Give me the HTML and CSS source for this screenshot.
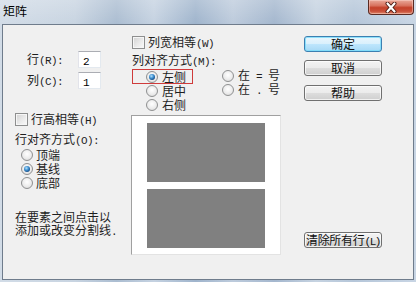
FILE: index.html
```html
<!DOCTYPE html>
<html>
<head>
<meta charset="utf-8">
<title>矩阵</title>
<link rel="stylesheet" href="styles.css">
</head>
<body>
<div class="window">
  <div class="titlebar">
    <span class="title">矩阵</span>
    <div class="close">
      <svg width="16" height="11" viewBox="0 0 16 11"><path d="M4.5 1.5 L11.5 9.5 M11.5 1.5 L4.5 9.5" stroke="#4a1a12" stroke-width="4" stroke-linecap="round"/><path d="M4.5 1.5 L11.5 9.5 M11.5 1.5 L4.5 9.5" stroke="#ffffff" stroke-width="2.2" stroke-linecap="round"/></svg>
    </div>
  </div>
  <div class="client">
    <div class="col col-left">
      <div class="field-row"><span class="field-label">行<span class="a">(R):</span></span><div class="field"><span class="a">2</span></div></div>
      <div class="field-row second"><span class="field-label">列<span class="a">(C):</span></span><div class="field"><span class="a">1</span></div></div>
      <div class="check row-check"><span class="box"></span><span>行高相等<span class="a">(H)</span></span></div>
      <div class="group-label">行对齐方式<span class="a">(O):</span></div>
      <div class="radios left-radios">
        <div class="radio"><span class="dot"></span><span>顶端</span></div>
        <div class="radio"><span class="dot on"></span><span>基线</span></div>
        <div class="radio"><span class="dot"></span><span>底部</span></div>
      </div>
      <p class="hint">在要素之间点击以<br>添加或改变分割线<span class="a">.</span></p>
    </div>
    <div class="col col-mid">
      <div class="check col-check"><span class="box"></span><span>列宽相等<span class="a">(W)</span></span></div>
      <div class="mid-label">列对齐方式<span class="a">(M):</span></div>
      <div class="align">
        <div class="align-left">
          <div class="focus"><div class="radio"><span class="dot on"></span><span>左侧</span></div></div>
          <div class="radio indent"><span class="dot"></span><span>居中</span></div>
          <div class="radio indent"><span class="dot"></span><span>右侧</span></div>
        </div>
        <div class="align-right">
          <div class="radio"><span class="dot"></span><span>在<span class="a"> = </span>号</span></div>
          <div class="radio"><span class="dot"></span><span>在<span class="a"> . </span>号</span></div>
        </div>
      </div>
      <div class="preview">
        <div class="cell"></div>
        <div class="cell"></div>
      </div>
    </div>
    <div class="col col-right">
      <div class="btn default">确定</div>
      <div class="btn">取消</div>
      <div class="btn help">帮助</div>
      <div class="btn clear">清除所有行<span class="a">(L)</span></div>
    </div>
  </div>
</div>
</body>
</html>
```
FILE: styles.css
```css
* { box-sizing: border-box; }
html, body { margin: 0; padding: 0; }
body {
  width: 416px;
  height: 282px;
  overflow: hidden;
  font-family: "Noto Sans CJK SC", sans-serif;
  font-size: 12px;
  color: #1e1e1e;
  background: #c3d5e9;
}
.a {
  font-family: "Liberation Mono", monospace;
  font-size: 11px;
  letter-spacing: -0.6px;
  white-space: pre;
}
.window {
  width: 416px;
  height: 282px;
  display: flex;
  flex-direction: column;
  padding: 0 2px 2px 2px;
  background:
    linear-gradient(180deg, rgba(255,255,255,0.22) 0, rgba(255,255,255,0) 24px),
    linear-gradient(90deg, #d2dce7 0%, #c8d4e1 18%, #abbdd1 28%, #c5d2e1 37%, #9fb4cc 47%, #bdcbdc 56%, #a4b7ce 66%, #c6d3e1 76%, #b5c6d9 85%, #c8d5e4 100%);
}
.titlebar {
  height: 24px;
  flex: none;
  display: flex;
  justify-content: space-between;
  align-items: flex-start;
  padding-left: 1px;
}
.title {
  margin-top: 4px;
  line-height: 14px;
  font-size: 12px;
  color: #000;
}
.close {
  width: 46px;
  height: 15px;
  border: 1px solid #5a2a22;
  border-top: none;
  border-radius: 0 0 4px 4px;
  background: linear-gradient(180deg, #e9a99a 0%, #d8735f 40%, #c4412a 55%, #c9503a 80%, #e08a6c 100%);
  box-shadow: inset 0 0 0 1px rgba(255,220,210,0.45);
  display: flex;
  justify-content: center;
  align-items: center;
}
.client {
  flex: 1;
  border: 1px solid #6f7c8c;
  background: #f0f0f0;
  display: grid;
  grid-template-columns: 128px 160px 122px;
}
.col { display: flex; flex-direction: column; }

/* left column */
.col-left { padding-top: 26px; }
.field-row {
  display: flex;
  align-items: center;
  height: 17px;
  padding-left: 24px;
}
.field-row.second { margin-top: 4px; }
.field-label { width: 51px; line-height: 14px; }
.field {
  width: 23px;
  height: 17px;
  background: #fff;
  border: 1px solid #e3e9ef;
  border-top-color: #abadb3;
  border-left-color: #e2e3ea;
  padding-left: 4px;
  line-height: 15px;
  color: #000;
}
.check {
  display: flex;
  align-items: center;
  gap: 3px;
  height: 13px;
  line-height: 13px;
}
.box {
  width: 13px;
  height: 13px;
  flex: none;
  border: 1px solid #8e8f8f;
  background: linear-gradient(135deg, #d2d2d2 0%, #ececec 60%, #fafafa 100%);
  box-shadow: inset 0 0 0 1px #f6f6f6;
}
.row-check { margin-top: 24px; padding-left: 12px; }
.group-label { margin-top: 6px; padding-left: 12px; line-height: 14px; }
.radios { display: flex; flex-direction: column; }
.left-radios { padding-left: 18px; }
.radio {
  display: flex;
  align-items: center;
  gap: 4px;
  height: 14px;
  line-height: 14px;
}
.left-radios .radio { gap: 3px; }
.dot {
  position: relative;
  width: 12px;
  height: 12px;
  flex: none;
  border-radius: 50%;
  border: 1px solid #8f9091;
  background: radial-gradient(circle at 50% 40%, #ffffff 0%, #ececec 55%, #d3d3d3 100%);
}
.dot.on::after {
  content: "";
  position: absolute;
  left: 2px;
  top: 2px;
  width: 6px;
  height: 6px;
  border-radius: 50%;
  background: radial-gradient(circle at 40% 35%, #b6e2fb 0%, #3f90d0 40%, #134a85 75%, #0a2f5a 100%);
}
.hint { margin: 20px 0 0 0; padding-left: 12px; line-height: 13px; }

/* middle column */
.col-mid { padding-top: 11px; }
.col-check { padding-left: 1px; }
.mid-label { margin-top: 4px; padding-left: 1px; line-height: 13px; }
.align { display: flex; }
.align-left { width: 91px; display: flex; flex-direction: column; }
.focus {
  margin-left: 1px;
  width: 61px;
  height: 15px;
  border: 1px solid #cf3b3b;
  padding-left: 13px;
}
.focus .radio { height: 13px; line-height: 13px; }
.radio.indent { padding-left: 15px; }
.align-right { display: flex; flex-direction: column; }
.preview {
  margin-top: 3px;
  width: 150px;
  height: 140px;
  background: #fff;
  border: 1px solid #a0a0a0;
  border-right-color: #e3e3e3;
  border-bottom-color: #e3e3e3;
  padding: 7px 15px 6px 15px;
  display: flex;
  flex-direction: column;
  gap: 7px;
}
.cell { height: 59px; background: #808080; }

/* right column */
.col-right { padding: 11px 0 31px 13px; gap: 8px; }
.btn {
  width: 78px;
  height: 16px;
  border: 1px solid #707070;
  border-radius: 3px;
  background: linear-gradient(180deg, #f3f3f3 0%, #ebebeb 50%, #dddddd 51%, #cfcfcf 100%);
  box-shadow: inset 0 0 0 1px rgba(255,255,255,0.7);
  text-align: center;
  line-height: 14px;
  color: #111;
  white-space: nowrap;
  overflow: hidden;
}
.btn.default {
  border-color: #3c7fb1;
  background: linear-gradient(180deg, #eaf6fd 0%, #d9f0fc 50%, #bee6fd 51%, #a7d9f5 100%);
  box-shadow: inset 0 0 0 1px rgba(120,220,250,0.8);
}
.btn.help { margin-top: 1px; }
.btn.clear { margin-top: auto; letter-spacing: -0.3px; }
.btn.clear .a { letter-spacing: -1.4px; }
```
